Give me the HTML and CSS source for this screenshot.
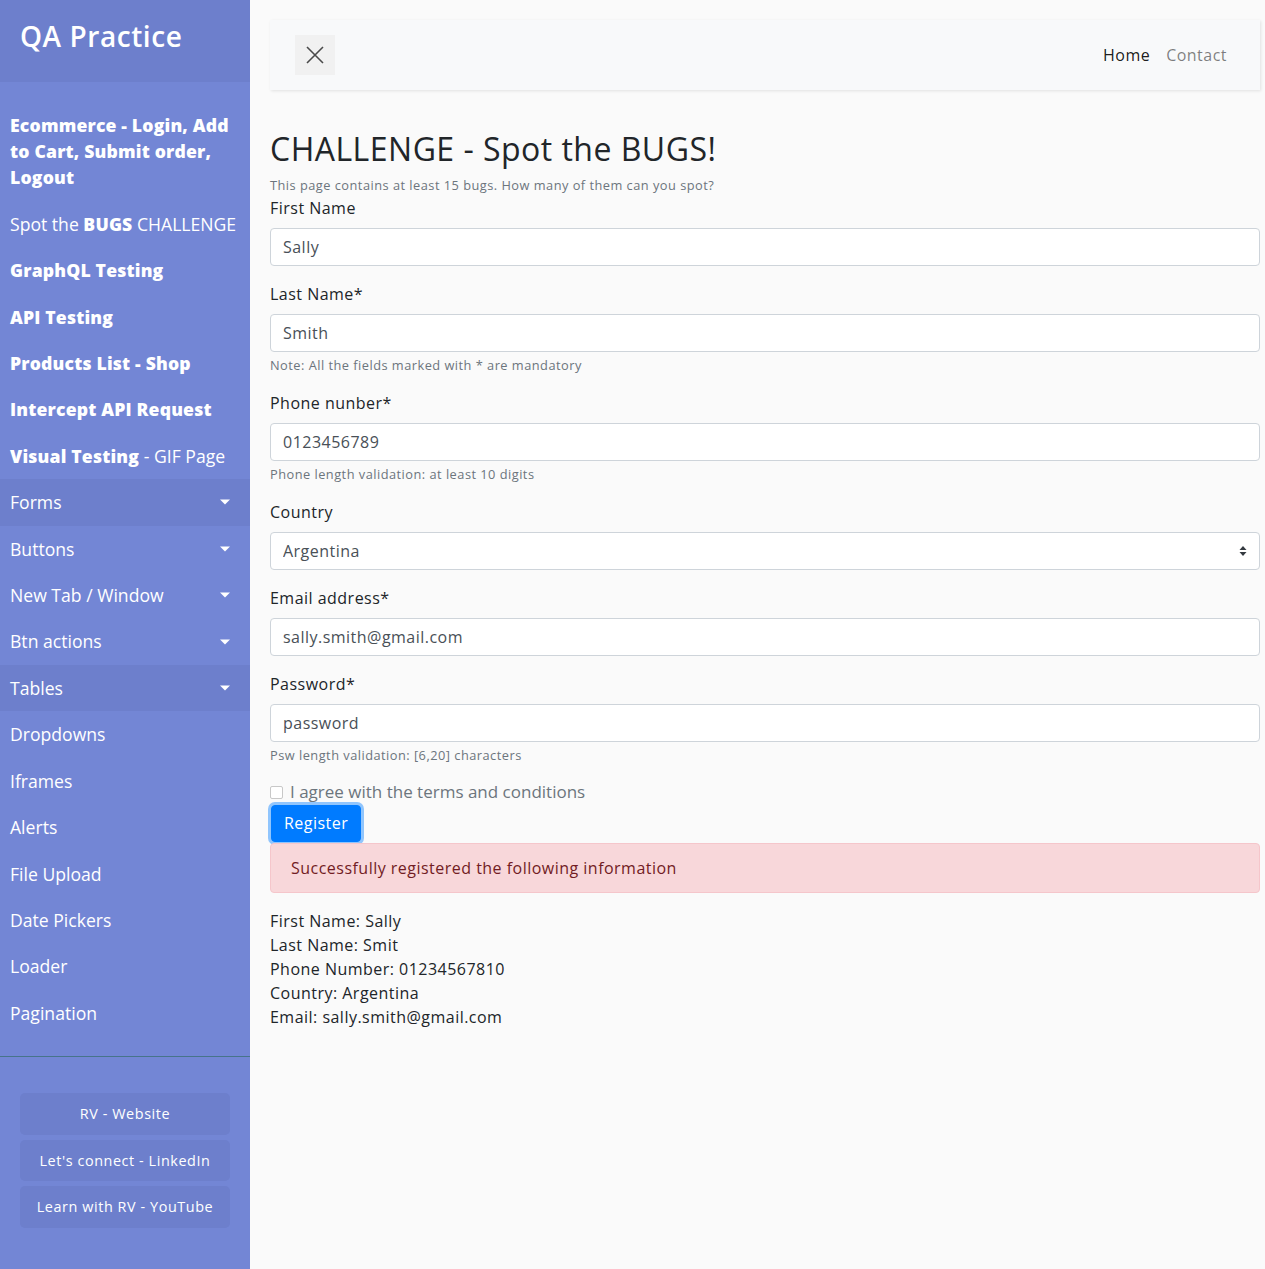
FILE: index.html
```html
<!DOCTYPE html>
<html lang="en">
<head>
<meta charset="utf-8">
<title>QA Practice - Spot the BUGS</title>
<link rel="stylesheet" href="styles.css">
</head>
<body>
<div class="wrapper">
  <nav class="sidebar">
    <div class="sidebar-header"><h3>QA Practice</h3></div>
    <ul class="components">
      <li><a href="#"><b>Ecommerce - Login, Add to Cart, Submit order, Logout</b></a></li>
      <li><a href="#">Spot the <b>BUGS</b> CHALLENGE</a></li>
      <li><a href="#"><b>GraphQL Testing</b></a></li>
      <li><a href="#"><b>API Testing</b></a></li>
      <li><a href="#"><b>Products List - Shop</b></a></li>
      <li><a href="#"><b>Intercept API Request</b></a></li>
      <li><a href="#"><b>Visual Testing</b> - GIF Page</a></li>
      <li><a href="#" class="toggle active">Forms</a></li>
      <li><a href="#" class="toggle">Buttons</a></li>
      <li><a href="#" class="toggle">New Tab / Window</a></li>
      <li><a href="#" class="toggle">Btn actions</a></li>
      <li><a href="#" class="toggle active">Tables</a></li>
      <li><a href="#">Dropdowns</a></li>
      <li><a href="#">Iframes</a></li>
      <li><a href="#">Alerts</a></li>
      <li><a href="#">File Upload</a></li>
      <li><a href="#">Date Pickers</a></li>
      <li><a href="#">Loader</a></li>
      <li><a href="#">Pagination</a></li>
    </ul>
    <ul class="ctas">
      <li><a href="#">RV - Website</a></li>
      <li><a href="#">Let's connect - LinkedIn</a></li>
      <li><a href="#">Learn with RV - YouTube</a></li>
    </ul>
  </nav>
  <main class="content">
    <div class="navbar">
      <button class="close-btn" type="button" aria-label="Toggle sidebar">
        <svg width="20" height="20" viewBox="0 0 20 20"><path d="M2 2 L18 18 M18 2 L2 18" stroke="#4a4a4a" stroke-width="1.6" fill="none"/></svg>
      </button>
      <div class="nav-links">
        <a href="#" class="nav-link current">Home</a>
        <a href="#" class="nav-link">Contact</a>
      </div>
    </div>
    <h2 class="title">CHALLENGE - Spot the BUGS!</h2>
    <small class="muted">This page contains at least 15 bugs. How many of them can you spot?</small>
    <form class="form">
      <div class="group">
        <label>First Name</label>
        <input class="control" type="text" value="Sally">
      </div>
      <div class="group">
        <label>Last Name*</label>
        <input class="control" type="text" value="Smith">
        <small class="muted help">Note: All the fields marked with * are mandatory</small>
      </div>
      <div class="group">
        <label>Phone nunber*</label>
        <input class="control" type="text" value="0123456789">
        <small class="muted help">Phone length validation: at least 10 digits</small>
      </div>
      <div class="group">
        <label>Country</label>
        <div class="select-wrap">
          <select class="control select"><option>Argentina</option></select>
          <svg class="select-arrow" width="8" height="12" viewBox="0 0 8 12"><path d="M4 1 L7.5 5 H0.5 Z M4 11 L7.5 7 H0.5 Z" fill="#343a40"/></svg>
        </div>
      </div>
      <div class="group">
        <label>Email address*</label>
        <input class="control" type="text" value="sally.smith@gmail.com">
      </div>
      <div class="group">
        <label>Password*</label>
        <input class="control" type="text" value="password">
        <small class="muted help">Psw length validation: [6,20] characters</small>
      </div>
      <div class="check">
        <span class="box"></span>
        <span class="check-label">I agree with the terms and conditions</span>
      </div>
      <button class="btn-primary" type="button">Register</button>
      <div class="alert">Successfully registered the following information</div>
      <div class="results">
        <div>First Name: Sally</div>
        <div>Last Name: Smit</div>
        <div>Phone Number: 01234567810</div>
        <div>Country: Argentina</div>
        <div>Email: sally.smith@gmail.com</div>
      </div>
    </form>
  </main>
</div>
</body>
</html>
```
FILE: styles.css
```css
* { box-sizing: border-box; }
html, body { margin: 0; padding: 0; }
body {
  font-family: "Open Sans", "DejaVu Sans", sans-serif;
  font-size: 16px;
  line-height: 1.5;
  color: #212529;
  background: #fafafa;
}
.wrapper {
  display: flex;
  align-items: stretch;
  min-height: 100vh;
}
.sidebar {
  width: 250px;
  flex: 0 0 250px;
  background: #7386d5;
  color: #fff;
}
.sidebar-header {
  padding: 20px;
  background: #6d7fcc;
}
.sidebar-header h3 {
  margin: 0 0 8px;
  font-size: 28px;
  font-weight: 600;
  letter-spacing: 0.02em;
  line-height: 1.2;
}
.sidebar ul {
  list-style: none;
  margin: 0 0 16px;
  padding: 0;
}
.sidebar ul.components {
  padding: 20px 0;
  border-bottom: 1px solid #47748b;
}
.sidebar a {
  color: #fff;
  text-decoration: none;
}
.components a {
  display: block;
  padding: 10px;
  font-size: 17.6px;
  line-height: 26.4px;
  position: relative;
}
.components b { font-weight: 800; letter-spacing: 0.01em; }
.components a.active { background: #6d7fcc; }
.components a.toggle::after {
  content: "";
  position: absolute;
  right: 20px;
  top: 50%;
  transform: translateY(-50%);
  border-top: 5px solid #fff;
  border-left: 5px solid transparent;
  border-right: 5px solid transparent;
}
.sidebar ul.ctas { padding: 20px; }
.ctas a {
  display: block;
  text-align: center;
  font-size: 14.4px;
  letter-spacing: 0.04em;
  padding: 10px;
  line-height: 21.6px;
  border-radius: 5px;
  margin-bottom: 5px;
  background: #6d7fcc;
}
.content {
  flex: 1;
  padding: 20px 5px 20px 20px;
  letter-spacing: 0.03em;
}
.navbar {
  display: flex;
  align-items: center;
  justify-content: space-between;
  padding: 15px 25px;
  background: #f8f9fa;
  box-shadow: 1px 1px 3px rgba(0,0,0,0.1);
  margin-bottom: 40px;
}
.close-btn {
  width: 40px;
  height: 40px;
  border: none;
  background: #f1f1f1;
  display: flex;
  align-items: center;
  justify-content: center;
  padding: 0;
}
.nav-links { display: flex; }
.nav-link {
  padding: 8px;
  text-decoration: none;
  color: rgba(0,0,0,0.5);
}
.nav-link.current { color: rgba(0,0,0,0.9); }
.title {
  margin: 0 0 8px;
  font-size: 32px;
  font-weight: 500;
  line-height: 1.2;
}
.muted {
  display: block;
  font-size: 12.8px;
  line-height: 19.2px;
  color: #6c757d;
}
.group { margin-bottom: 16px; }
.group label {
  display: block;
  margin-bottom: 8px;
}
.control {
  display: block;
  width: 100%;
  height: 38px;
  padding: 6px 12px;
  font: inherit;
  letter-spacing: inherit;
  color: #495057;
  background: #fff;
  border: 1px solid #ced4da;
  border-radius: 4px;
}
.help { margin-top: 4px; }
.select-wrap { position: relative; }
.select { appearance: none; -webkit-appearance: none; }
.select-arrow {
  position: absolute;
  right: 13px;
  top: 13px;
}
.check {
  display: flex;
  align-items: center;
  height: 22px;
}
.box {
  width: 13px;
  height: 13px;
  border: 1px solid #c8c8c8;
  border-radius: 2px;
  background: #fff;
  margin-right: 7px;
}
.check-label {
  font-size: 17px;
  letter-spacing: 0;
  color: #6c757d;
}
.btn-primary {
  display: block;
  font: inherit;
  letter-spacing: inherit;
  color: #fff;
  background: #007bff;
  border: 1px solid #007bff;
  border-radius: 4px;
  padding: 5px 12px 6px;
  box-shadow: 0 0 0 3px rgba(38,143,255,0.5);
  margin-left: 1px;
  margin-top: 2px;
}
.alert {
  padding: 12px 20px;
  color: #721c24;
  background: #f8d7da;
  border: 1px solid #f5c6cb;
  border-radius: 4px;
  margin: 1px 0 16px;
}
.results { line-height: 24px; }
```
